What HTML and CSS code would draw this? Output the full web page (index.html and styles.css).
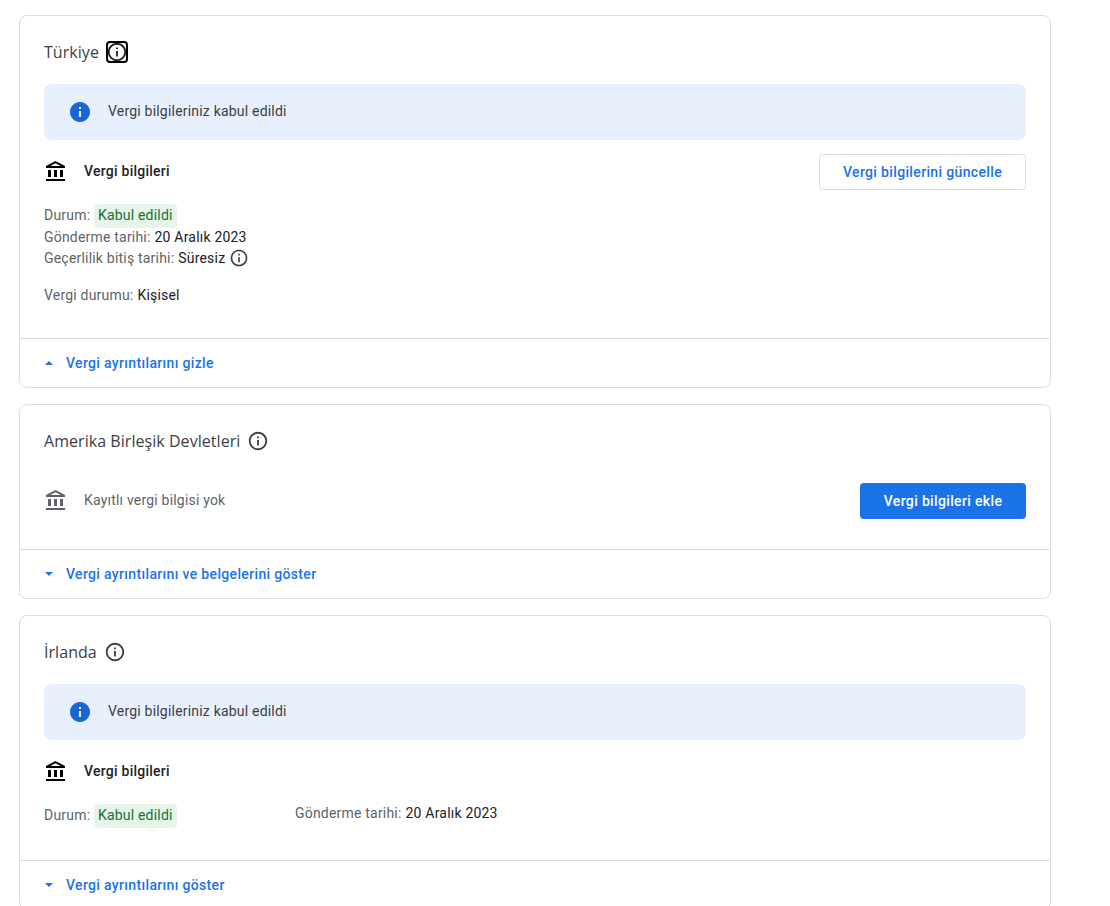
FILE: index.html
```html
<!DOCTYPE html>
<html lang="tr">
<head>
  <meta charset="UTF-8">
  <title>Vergi bilgileri</title>
  <link rel="stylesheet" href="styles.css">
</head>
<body>

  <svg class="sprite" width="0" height="0">
    <symbol id="info" viewBox="0 0 24 24"><path d="M11 7h2v2h-2zm0 4h2v6h-2zm1-9C6.48 2 2 6.48 2 12s4.48 10 10 10 10-4.48 10-10S17.52 2 12 2zm0 18c-4.41 0-8-3.59-8-8s3.59-8 8-8 8 3.59 8 8-3.59 8-8 8z"/></symbol>
    <symbol id="info-filled" viewBox="0 0 24 24"><path d="M12 2C6.48 2 2 6.48 2 12s4.48 10 10 10 10-4.48 10-10S17.52 2 12 2zm1 15h-2v-6h2v6zm0-8h-2V7h2v2z"/></symbol>
    <symbol id="bank" viewBox="0 0 24 24"><path d="M7 10H4v7h3v-7zm6 0h-3v7h3v-7zm8 9H2v2h19v-2zm-2-9h-3v7h3v-7zm-7.5-6.74L16.71 6H6.29l5.21-2.74m0-2.26L2 6v2h19V6l-9.5-5z"/></symbol>
    <symbol id="caret-up" viewBox="0 0 10 5"><path d="M0 5L5 0l5 5z"/></symbol>
    <symbol id="caret-down" viewBox="0 0 10 5"><path d="M0 0l5 5 5-5z"/></symbol>
  </svg>

  <section class="card">
    <div class="card-body card-turkey">
      <h2 class="card-title">Türkiye <span class="help focused"><svg class="icon-help"><use href="#info"/></svg></span></h2>
      <div class="banner">
        <svg class="banner-icon"><use href="#info-filled"/></svg>
        <span class="banner-text">Vergi bilgileriniz kabul edildi</span>
      </div>
      <div class="tax-row">
        <svg class="bank"><use href="#bank"/></svg>
        <span class="tax-label">Vergi bilgileri</span>
        <button type="button" class="btn btn-outline">Vergi bilgilerini güncelle</button>
      </div>
      <div class="details">
        <div class="line-status"><span class="key">Durum:</span> <span class="chip">Kabul edildi</span></div>
        <div class="line"><span class="key">Gönderme tarihi:</span> 20 Aralık 2023</div>
        <div class="line"><span class="key">Geçerlilik bitiş tarihi:</span> Süresiz <svg class="icon-inline"><use href="#info"/></svg></div>
        <div class="line line-gap"><span class="key">Vergi durumu:</span> Kişisel</div>
      </div>
    </div>
    <a class="card-footer" href="#"><svg class="caret"><use href="#caret-up"/></svg>Vergi ayrıntılarını gizle</a>
  </section>

  <section class="card">
    <div class="card-body card-usa">
      <h2 class="card-title">Amerika Birleşik Devletleri <span class="help"><svg class="icon-help"><use href="#info"/></svg></span></h2>
      <div class="tax-row tax-row-empty">
        <svg class="bank"><use href="#bank"/></svg>
        <span class="tax-label">Kayıtlı vergi bilgisi yok</span>
        <button type="button" class="btn btn-primary">Vergi bilgileri ekle</button>
      </div>
    </div>
    <a class="card-footer" href="#"><svg class="caret"><use href="#caret-down"/></svg>Vergi ayrıntılarını ve belgelerini göster</a>
  </section>

  <section class="card">
    <div class="card-body card-ireland">
      <h2 class="card-title">İrlanda <span class="help"><svg class="icon-help"><use href="#info"/></svg></span></h2>
      <div class="banner">
        <svg class="banner-icon"><use href="#info-filled"/></svg>
        <span class="banner-text">Vergi bilgileriniz kabul edildi</span>
      </div>
      <div class="tax-row tax-row-plain">
        <svg class="bank"><use href="#bank"/></svg>
        <span class="tax-label">Vergi bilgileri</span>
      </div>
      <div class="details-grid">
        <div class="line-status"><span class="key">Durum:</span> <span class="chip">Kabul edildi</span></div>
        <div class="line line-side"><span class="key">Gönderme tarihi:</span> 20 Aralık 2023</div>
      </div>
    </div>
    <a class="card-footer" href="#"><svg class="caret"><use href="#caret-down"/></svg>Vergi ayrıntılarını göster</a>
  </section>

</body>
</html>
```

FILE: styles.css
```css
html, body {
  height: 100%;
  overflow: hidden;
}
body {
  margin: 0;
  padding: 15px 59px 0 19px;
  box-sizing: border-box;
  background-color: #ffffff;
  color: #202124;
  font-family: Roboto, Arial, sans-serif;
  font-size: 14px;
  line-height: 20px;
  letter-spacing: 0.2px;
}
.sprite {
  position: absolute;
}
.card {
  margin-bottom: 16px;
  background-color: #ffffff;
  border: 1px solid #dadce0;
  border-radius: 8px;
}
.card-body {
  padding: 24px 24px 0;
}
.card-turkey {
  padding-bottom: 33px;
}
.card-usa {
  padding-bottom: 30px;
}
.card-ireland {
  padding-bottom: 34px;
}
.card-title {
  display: flex;
  align-items: center;
  gap: 7px;
  height: 24px;
  margin: 0;
  color: #3c4043;
  font-family: "Open Sans", Roboto, sans-serif;
  font-size: 16px;
  font-weight: 500;
  letter-spacing: 0.05px;
}
.help {
  display: flex;
  fill: #3c4043;
}
.help.focused {
  outline: 2px solid #000000;
  outline-offset: -2px;
  border-radius: 4px;
  fill: #202124;
}
.icon-help {
  width: 22px;
  height: 22px;
}
.banner {
  display: flex;
  align-items: center;
  gap: 16px;
  height: 56px;
  margin-top: 20px;
  padding-left: 24px;
  background-color: #e8f0fe;
  border-radius: 8px;
  color: #3c4043;
}
.banner-icon {
  width: 24px;
  height: 24px;
  fill: #1967d2;
}
.banner-text {
  padding-bottom: 2px;
}
.tax-row {
  display: flex;
  align-items: center;
  gap: 16px;
  margin-top: 14px;
}
.tax-row-empty {
  margin-top: 30px;
  color: #5f6368;
  fill: #5f6368;
}
.tax-row-plain {
  height: 36px;
}
.bank {
  width: 24px;
  height: 24px;
}
.tax-label {
  padding-bottom: 2px;
  font-weight: 500;
  letter-spacing: 0.25px;
}
.tax-row-empty .tax-label {
  font-weight: 400;
  letter-spacing: 0.2px;
}
.btn {
  height: 36px;
  margin-left: auto;
  border-radius: 4px;
  font-family: Roboto, Arial, sans-serif;
  font-size: 14px;
  font-weight: 500;
  letter-spacing: 0.35px;
  cursor: pointer;
}
.btn-outline {
  width: 207px;
  background-color: #ffffff;
  border: 1px solid #dadce0;
  color: #1a73e8;
}
.btn-primary {
  width: 166px;
  background-color: #1a73e8;
  border: none;
  color: #ffffff;
}
.details {
  margin-top: 14px;
}
.details-grid {
  display: grid;
  grid-template-columns: 251px 1fr;
  margin-top: 14px;
}
.key {
  color: #5f6368;
}
.line-status {
  height: 22px;
  line-height: 22px;
}
.line {
  display: flex;
  align-items: center;
  gap: 4px;
  height: 21px;
}
.line-side {
  height: 18px;
}
.line-gap {
  margin-top: 16px;
}
.chip {
  display: inline-block;
  padding: 0 4px 1px;
  line-height: 23px;
  background-color: #e6f4ea;
  border-radius: 4px;
  color: #137333;
}
.icon-inline {
  width: 20px;
  height: 20px;
  fill: #3c4043;
}
.card-footer {
  display: flex;
  align-items: center;
  height: 48px;
  padding-left: 24px;
  border-top: 1px solid #dadce0;
  color: #1a73e8;
  font-weight: 500;
  letter-spacing: 0.34px;
  text-decoration: none;
}
.caret {
  width: 8px;
  height: 4px;
  margin: 0 13px 0 1px;
  fill: #1a73e8;
}
```
